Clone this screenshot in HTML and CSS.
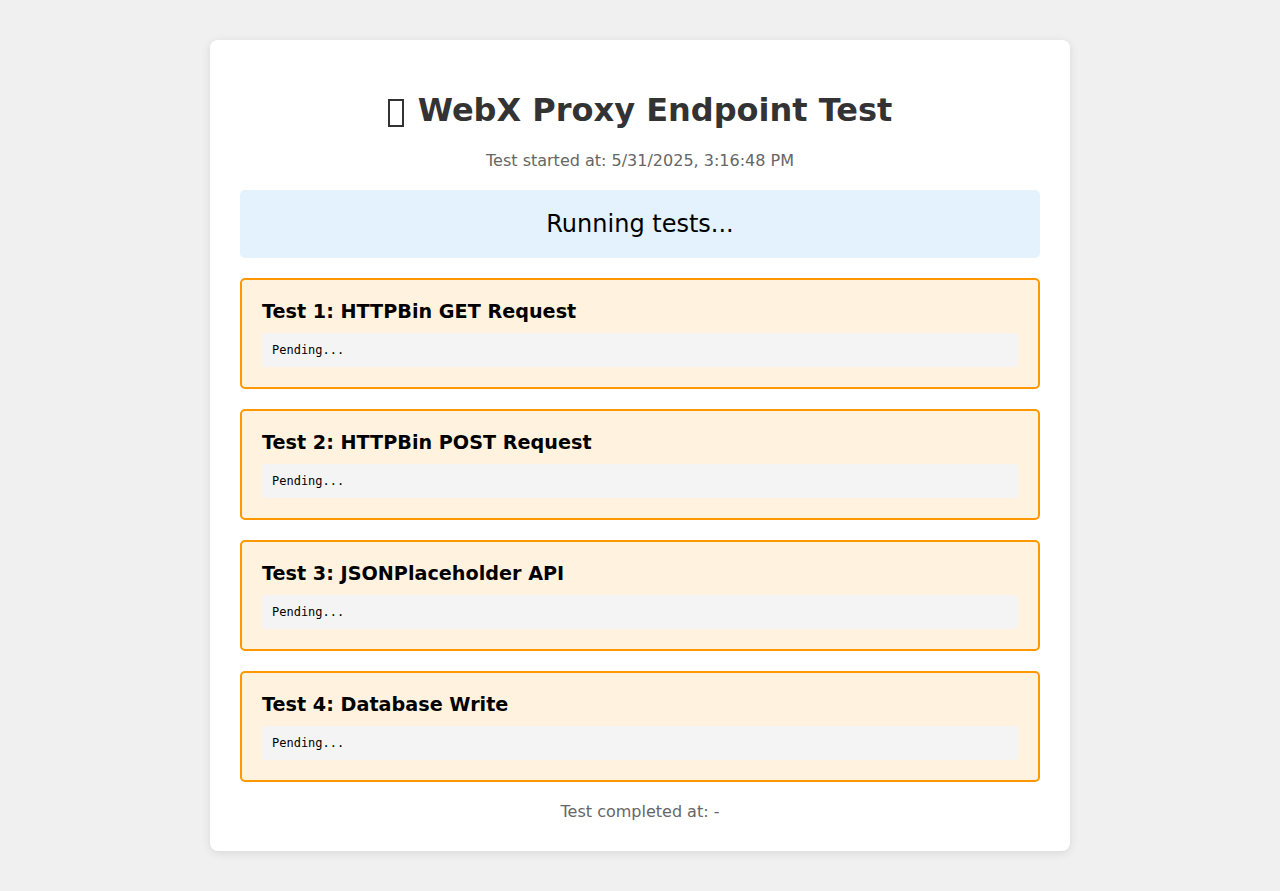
FILE: index.html
```html
<!DOCTYPE html>
<html>
<head>
<meta charset="utf-8">
<title>WebX Proxy Endpoint Test</title>
<link rel="stylesheet" href="styles.css">
</head>
<body>
<div class="container">
  <h1><span class="tofu" aria-hidden="true"></span> WebX Proxy Endpoint Test</h1>
  <p class="timestamp">Test started at: 5/31/2025, 3:16:48 PM</p>
  <div class="status">Running tests...</div>
  <div class="test">
    <h3>Test 1: HTTPBin GET Request</h3>
    <pre class="result">Pending...</pre>
  </div>
  <div class="test">
    <h3>Test 2: HTTPBin POST Request</h3>
    <pre class="result">Pending...</pre>
  </div>
  <div class="test">
    <h3>Test 3: JSONPlaceholder API</h3>
    <pre class="result">Pending...</pre>
  </div>
  <div class="test">
    <h3>Test 4: Database Write</h3>
    <pre class="result">Pending...</pre>
  </div>
  <div class="timestamp end">Test completed at: -</div>
</div>
</body>
</html>
```
FILE: styles.css
```css
html, body {
  margin: 0;
  padding: 0;
}
body {
  background: #f0f0f0;
  font-family: "DejaVu Sans", sans-serif;
  padding: 40px 20px 40px;
}
.container {
  width: 800px;
  margin: 0 auto;
  background: #fff;
  padding: 30px;
  border-radius: 8px;
  box-shadow: 0 2px 10px rgba(0, 0, 0, 0.1);
}
h1 {
  text-align: center;
  color: #333;
  font-size: 32px;
  margin: 0.67em 0;
}
.tofu {
  display: inline-block;
  box-sizing: border-box;
  width: 16px;
  height: 28px;
  border: 2px solid #333;
  margin-right: 3px;
  vertical-align: -6px;
}
.timestamp {
  text-align: center;
  color: #666;
  font-size: 16px;
  margin: 16px 0;
}
.status {
  background: #e3f2fd;
  border-radius: 5px;
  padding: 20px;
  text-align: center;
  font-size: 24px;
  margin: 20px 0;
}
.test {
  background: #fff3e0;
  border: 2px solid #ff9800;
  border-radius: 5px;
  padding: 20px;
  margin: 20px 0;
}
.test h3 {
  margin: 0 0 10px;
  font-size: 19.2px;
}
.result {
  background: #f4f4f4;
  padding: 10px;
  margin: 0;
  border-radius: 3px;
  font-family: "DejaVu Sans Mono", monospace;
  font-size: 12px;
  line-height: 14px;
}
.end {
  margin: 20px 0 0;
}
```
